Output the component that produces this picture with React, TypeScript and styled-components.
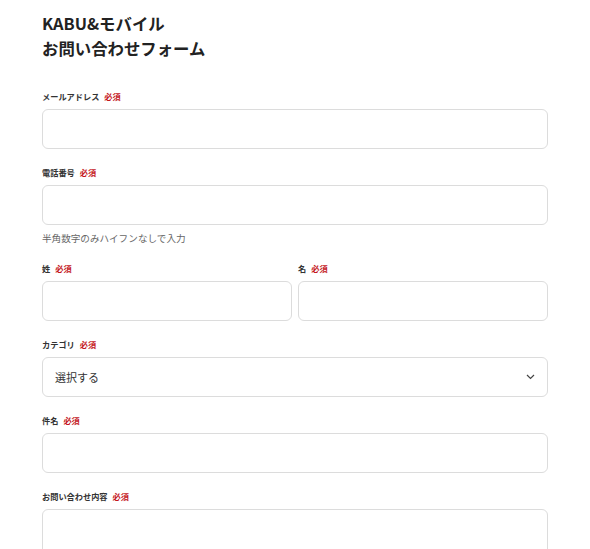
import styled, { createGlobalStyle } from 'styled-components';

const GlobalStyle = createGlobalStyle`
  html, body {
    margin: 0;
    padding: 0;
    background: #fff;
    overflow: hidden;
  }
  body {
    font-family: 'Noto Sans CJK JP', 'Noto Sans', sans-serif;
    color: #333;
  }
`;

const Page = styled.div`
  padding: 11px 42px 40px 42px;
`;

const Title = styled.h1`
  margin: 0 0 29px 0;
  font-size: 16.4px;
  line-height: 25px;
  font-weight: 700;
  color: #222;
`;

const Field = styled.div`
  margin-bottom: 17px;
`;

const Row = styled.div`
  display: grid;
  grid-template-columns: 1fr 1fr;
  gap: 6px;
`;

const Label = styled.label`
  display: flex;
  align-items: center;
  gap: 5px;
  height: 12px;
  margin-bottom: 7px;
  font-size: 8.2px;
  font-weight: 700;
  color: #333;
`;

const Required = styled.span`
  color: #c4161c;
  font-weight: 700;
`;

const Input = styled.input`
  display: block;
  box-sizing: border-box;
  width: 100%;
  height: 40px;
  border: 1px solid #dcdcdc;
  border-radius: 6px;
  background: #fff;
  padding: 0 12px;
  outline: none;
`;

const Hint = styled.p`
  margin: 6px 0 0 0;
  font-size: 9.6px;
  line-height: 14px;
  color: #666;
`;

const Select = styled.div`
  box-sizing: border-box;
  height: 40px;
  border: 1px solid #dcdcdc;
  border-radius: 6px;
  display: flex;
  align-items: center;
  justify-content: space-between;
  padding: 0 12px 0 12px;
  font-size: 11px;
  color: #333;
`;

const TextArea = styled.textarea`
  display: block;
  box-sizing: border-box;
  width: 100%;
  height: 140px;
  border: 1px solid #dcdcdc;
  border-radius: 6px;
  resize: none;
  outline: none;
`;

function Req({ text }: { text: string }) {
  return (
    <Label>
      {text}
      <Required>必須</Required>
    </Label>
  );
}

export default function App() {
  return (
    <Page>
      <GlobalStyle />
      <Title>
        KABU&amp;モバイル
        <br />
        お問い合わせフォーム
      </Title>

      <Field>
        <Req text="メールアドレス" />
        <Input type="email" />
      </Field>

      <Field>
        <Req text="電話番号" />
        <Input type="tel" />
        <Hint>半角数字のみハイフンなしで入力</Hint>
      </Field>

      <Row>
        <Field>
          <Req text="姓" />
          <Input />
        </Field>
        <Field>
          <Req text="名" />
          <Input />
        </Field>
      </Row>

      <Field>
        <Req text="カテゴリ" />
        <Select>
          <span>選択する</span>
          <svg width="9" height="6" viewBox="0 0 9 6" fill="none">
            <path d="M1 1l3.5 3.5L8 1" stroke="#444" strokeWidth="1.2" />
          </svg>
        </Select>
      </Field>

      <Field>
        <Req text="件名" />
        <Input />
      </Field>

      <Field>
        <Req text="お問い合わせ内容" />
        <TextArea />
      </Field>
    </Page>
  );
}
